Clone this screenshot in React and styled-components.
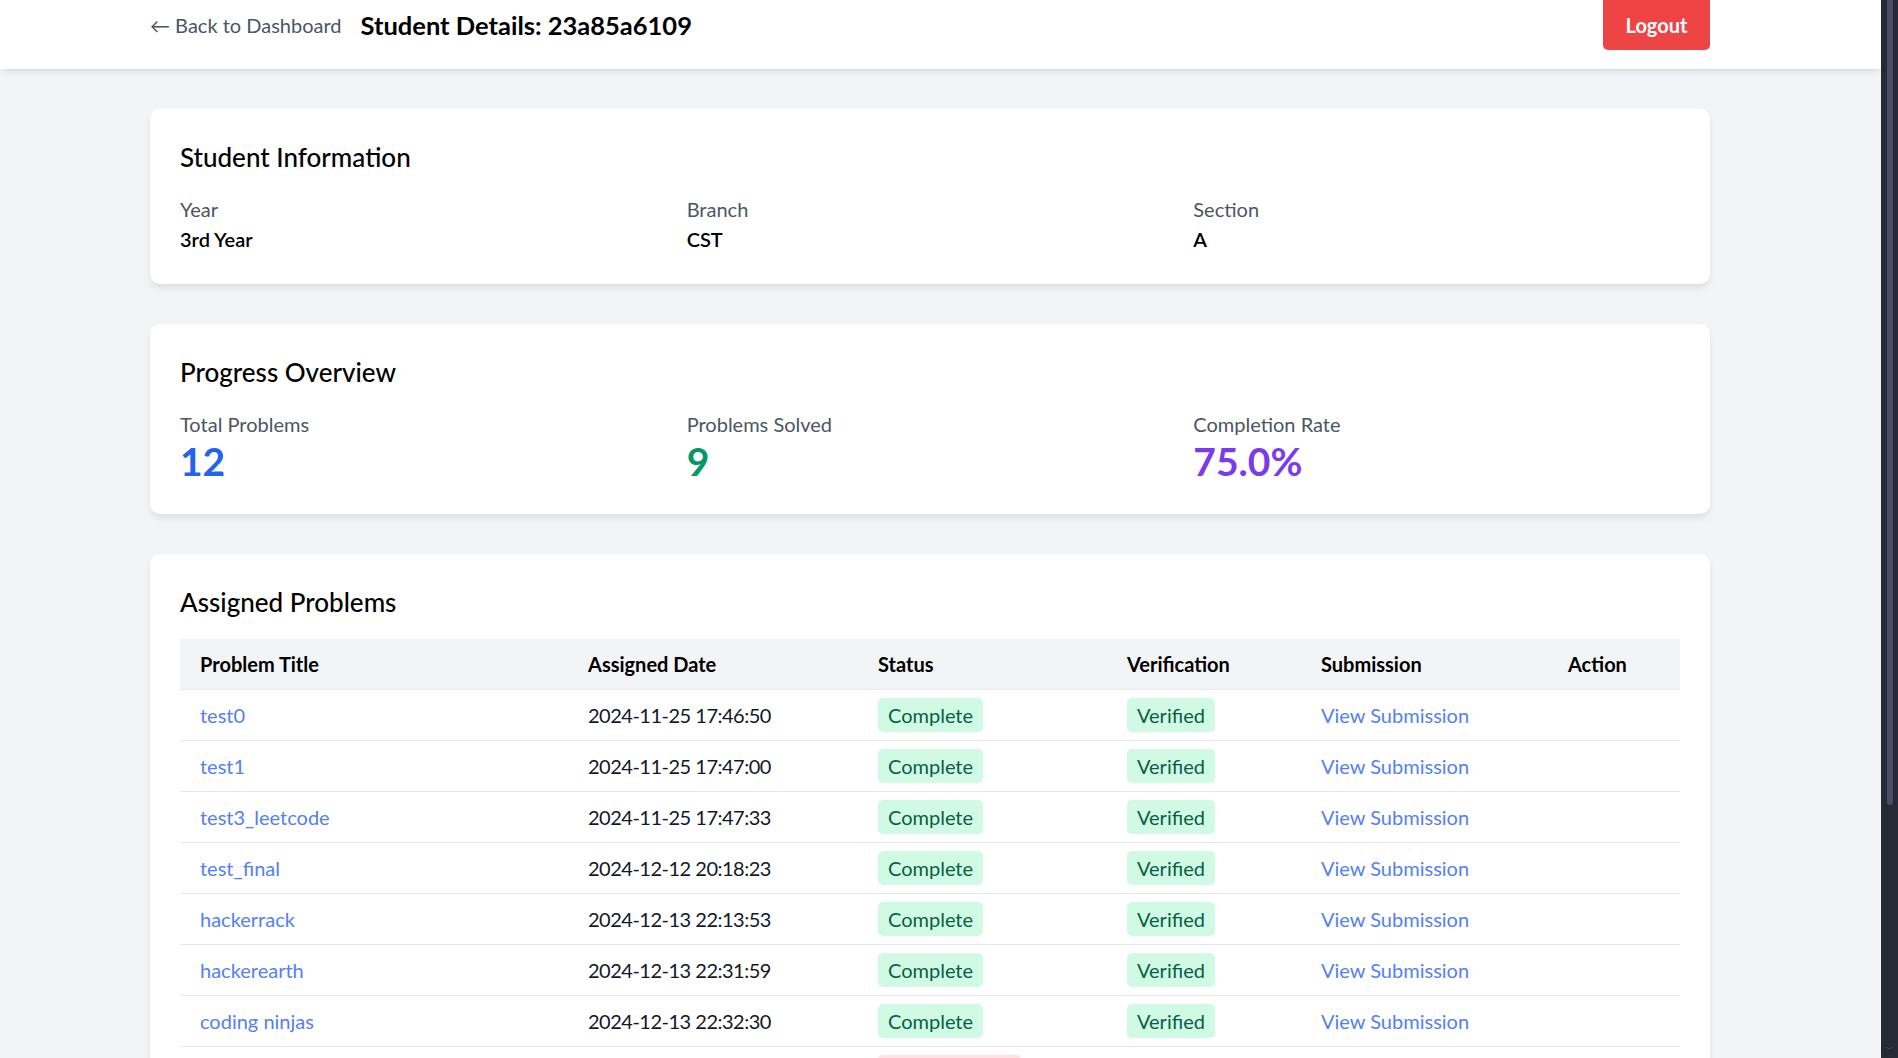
import React from 'react';
import styled, { createGlobalStyle } from 'styled-components';

const GlobalStyle = createGlobalStyle`
  html, body {
    margin: 0;
    padding: 0;
    overflow: hidden;
  }
  body {
    font-family: "Lato", "Liberation Sans", sans-serif;
    color: #111827;
    background: #f3f4f6;
  }
`;

const Screen = styled.div`
  display: flex;
  width: 1898px;
  height: 1058px;
  overflow: hidden;
`;

const Page = styled.div`
  flex: 1;
  height: 1058px;
  overflow: hidden;
  background: #f3f4f6;
`;

const ScrollTrack = styled.div`
  width: 17px;
  height: 1058px;
  background: #262a37;
  display: flex;
  flex-direction: column;
  align-items: center;
`;

const ScrollThumb = styled.div`
  width: 6px;
  height: 805px;
  background: #4b4d66;
  border-radius: 0 0 3px 3px;
`;

const ScrollArrow = styled.div`
  margin-top: auto;
  margin-bottom: 4px;
  color: #6b6e85;
  font-size: 9px;
  line-height: 10px;
`;

const Header = styled.header`
  background: #fff;
  height: 69px;
  box-shadow: 0 4px 8px -2px rgba(0, 0, 0, 0.1), 0 2px 4px -2px rgba(0, 0, 0, 0.06);
  position: relative;
  z-index: 1;
`;

const Container = styled.div`
  width: 1560px;
  margin-left: 150px;
`;

const HeaderBar = styled(Container)`
  display: flex;
  align-items: center;
  justify-content: space-between;
  height: 50px;
`;

const HeaderLeft = styled.div`
  display: flex;
  align-items: center;
  gap: 19px;
`;

const BackLink = styled.a`
  color: #4b5563;
  font-size: 20px;
  line-height: 30px;
  text-decoration: none;
  cursor: pointer;
`;

const PageTitle = styled.h1`
  margin: 0;
  font-size: 25.5px;
  line-height: 35px;
  font-weight: 700;
  color: #000;
`;

const LogoutButton = styled.button`
  background: #ef4444;
  color: #fff;
  border: none;
  border-radius: 0 0 5px 5px;
  font-family: inherit;
  font-weight: 700;
  font-size: 20px;
  line-height: 30px;
  height: 50px;
  width: 107px;
  cursor: pointer;
`;

const Main = styled(Container)`
  display: flex;
  flex-direction: column;
  gap: 40px;
  padding-top: 40px;
`;

const Card = styled.section`
  background: #fff;
  border-radius: 10px;
  padding: 30px;
  box-shadow: 0 5px 8px -1px rgba(0, 0, 0, 0.08), 0 2px 5px -2px rgba(0, 0, 0, 0.06);
`;

const CardTitle = styled.h2`
  margin: 0 0 20px;
  padding-top: 1px;
  font-size: 26px;
  line-height: 34px;
  font-weight: 500;
  color: #000;
`;

const InfoGrid = styled.div`
  display: grid;
  grid-template-columns: repeat(3, 1fr);
  gap: 20px;
`;

const Label = styled.div`
  color: #4b5563;
  font-size: 20px;
  line-height: 30px;
`;

const Value = styled.div`
  font-size: 20px;
  line-height: 30px;
  font-weight: 600;
  color: #000;
`;

const Stat = styled.div`
  font-size: 39px;
  line-height: 45px;
  font-weight: 700;
  color: ${p => p.$color};
`;

const Table = styled.table`
  width: 1500px;
  table-layout: fixed;
  border-collapse: collapse;
  font-size: 20px;
  line-height: 30px;
`;

const Th = styled.th`
  box-sizing: border-box;
  width: ${p => p.$w}px;
  text-align: left;
  padding: 10px 20px;
  background: #f3f4f6;
  font-weight: 700;
  color: #000;
  border-bottom: 1px solid #e5e7eb;
`;

const Td = styled.td`
  padding: 10px 20px;
  border-bottom: 1px solid #e5e7eb;
  color: #111827;
  white-space: nowrap;
  letter-spacing: ${p => (p.$tight ? '-0.5px' : 'normal')};
`;

const TextLink = styled.a`
  color: #5480f5;
  text-decoration: none;
  cursor: pointer;
`;

const Badge = styled.span`
  padding: 5px 10px;
  border-radius: 5px;
  background: ${p => (p.$tone === 'red' ? '#fee2e2' : '#d1fae5')};
  color: ${p => (p.$tone === 'red' ? '#991b1b' : '#065f46')};
`;

const columns = [
  ['Problem Title', 388],
  ['Assigned Date', 290],
  ['Status', 249],
  ['Verification', 194],
  ['Submission', 247],
  ['Action', 132],
];

const problems = [
  { title: 'test0', date: '2024-11-25 17:46:50', done: true },
  { title: 'test1', date: '2024-11-25 17:47:00', done: true },
  { title: 'test3_leetcode', date: '2024-11-25 17:47:33', done: true },
  { title: 'test_final', date: '2024-12-12 20:18:23', done: true },
  { title: 'hackerrack', date: '2024-12-13 22:13:53', done: true },
  { title: 'hackerearth', date: '2024-12-13 22:31:59', done: true },
  { title: 'coding ninjas', date: '2024-12-13 22:32:30', done: true },
  { title: 'codechef', date: '2024-12-14 10:05:12', done: false },
  { title: 'gfg practice', date: '2024-12-14 10:06:40', done: true },
  { title: 'test_dp', date: '2024-12-15 09:12:03', done: false },
];

export default function App() {
  return (
    <Screen>
      <GlobalStyle />
      <Page>
        <Header>
          <HeaderBar>
            <HeaderLeft>
              <BackLink>← Back to Dashboard</BackLink>
              <PageTitle>Student Details: 23a85a6109</PageTitle>
            </HeaderLeft>
            <LogoutButton>Logout</LogoutButton>
          </HeaderBar>
        </Header>

        <Main>
          <Card>
            <CardTitle>Student Information</CardTitle>
            <InfoGrid>
              <div>
                <Label>Year</Label>
                <Value>3rd Year</Value>
              </div>
              <div>
                <Label>Branch</Label>
                <Value>CST</Value>
              </div>
              <div>
                <Label>Section</Label>
                <Value>A</Value>
              </div>
            </InfoGrid>
          </Card>

          <Card>
            <CardTitle>Progress Overview</CardTitle>
            <InfoGrid>
              <div>
                <Label>Total Problems</Label>
                <Stat $color="#2563eb">12</Stat>
              </div>
              <div>
                <Label>Problems Solved</Label>
                <Stat $color="#059669">9</Stat>
              </div>
              <div>
                <Label>Completion Rate</Label>
                <Stat $color="#7c3aed">75.0%</Stat>
              </div>
            </InfoGrid>
          </Card>

          <Card>
            <CardTitle>Assigned Problems</CardTitle>
            <Table>
              <thead>
                <tr>
                  {columns.map(([name, w]) => (
                    <Th key={name} $w={w}>{name}</Th>
                  ))}
                </tr>
              </thead>
              <tbody>
                {problems.map(p => (
                  <tr key={p.title}>
                    <Td><TextLink>{p.title}</TextLink></Td>
                    <Td $tight>{p.date}</Td>
                    <Td>
                      {p.done
                        ? <Badge>Complete</Badge>
                        : <Badge $tone="red">Not Complete</Badge>}
                    </Td>
                    <Td>{p.done ? <Badge>Verified</Badge> : '-'}</Td>
                    <Td>{p.done ? <TextLink>View Submission</TextLink> : 'No submission'}</Td>
                    <Td></Td>
                  </tr>
                ))}
              </tbody>
            </Table>
          </Card>
        </Main>
      </Page>
      <ScrollTrack>
        <ScrollThumb />
        <ScrollArrow>﹀</ScrollArrow>
      </ScrollTrack>
    </Screen>
  );
}
